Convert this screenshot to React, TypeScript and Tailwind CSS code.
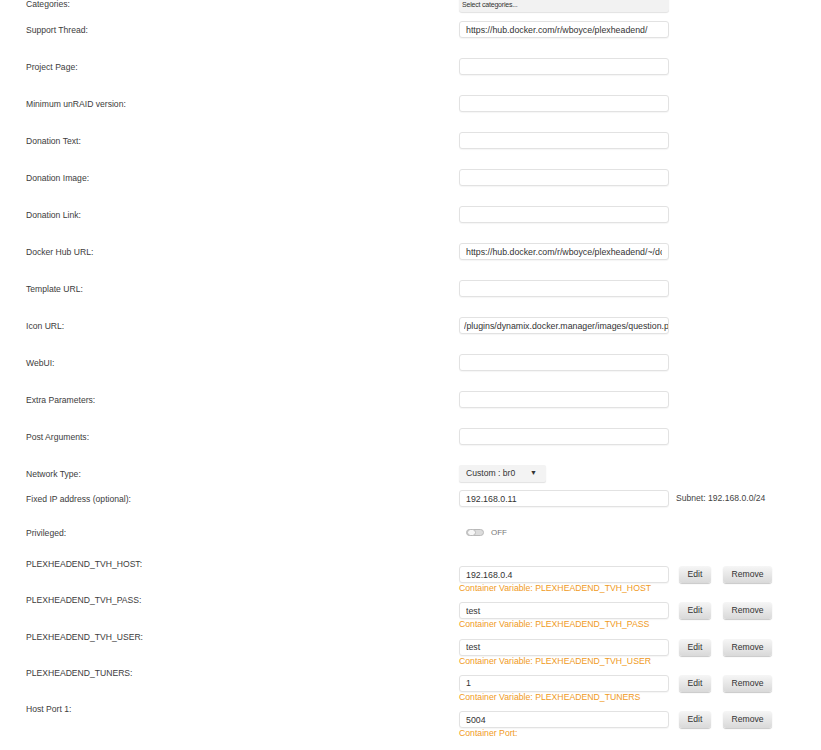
const fieldRows = [
  { label: "Support Thread:", value: "https://hub.docker.com/r/wboyce/plexheadend/" },
  { label: "Project Page:", value: "" },
  { label: "Minimum unRAID version:", value: "" },
  { label: "Donation Text:", value: "" },
  { label: "Donation Image:", value: "" },
  { label: "Donation Link:", value: "" },
  { label: "Docker Hub URL:", value: "https://hub.docker.com/r/wboyce/plexheadend/~/dockerfile/" },
  { label: "Template URL:", value: "" },
  { label: "Icon URL:", value: "/plugins/dynamix.docker.manager/images/question.png" },
  { label: "WebUI:", value: "" },
  { label: "Extra Parameters:", value: "" },
  { label: "Post Arguments:", value: "" },
];

const configRows = [
  { label: "PLEXHEADEND_TVH_HOST:", value: "192.168.0.4", note: "Container Variable: PLEXHEADEND_TVH_HOST" },
  { label: "PLEXHEADEND_TVH_PASS:", value: "test", note: "Container Variable: PLEXHEADEND_TVH_PASS" },
  { label: "PLEXHEADEND_TVH_USER:", value: "test", note: "Container Variable: PLEXHEADEND_TVH_USER" },
  { label: "PLEXHEADEND_TUNERS:", value: "1", note: "Container Variable: PLEXHEADEND_TUNERS" },
  { label: "Host Port 1:", value: "5004", note: "Container Port:" },
];

function Label({ children }: { children: React.ReactNode }) {
  return (
    <div className="w-[459px] shrink-0 pl-[26px] text-[8.6px] leading-[10px] text-[#3c3c3c]">
      {children}
    </div>
  );
}

function TextField({ value, className = "px-[6px]" }: { value: string; className?: string }) {
  return (
    <input
      readOnly
      value={value}
      className={`h-[17px] w-[210px] shrink-0 rounded-[3px] border border-[#e2e2e2] bg-white text-[8.8px] text-[#333] shadow-[0_1px_1px_rgba(0,0,0,0.04)] outline-none ${className}`}
    />
  );
}

function SmallButton({ children, className }: { children: React.ReactNode; className: string }) {
  return (
    <button
      className={`h-[17px] shrink-0 rounded-[3px] bg-linear-to-b from-[#f6f6f6] to-[#d9d9d9] text-[8.6px] text-[#333] shadow-[0_1px_1px_rgba(0,0,0,0.22)] ${className}`}
    >
      {children}
    </button>
  );
}

export default function App() {
  return (
    <div className="min-h-[750px] bg-white font-['Liberation_Sans',Arial,sans-serif]">
      <div className="-mt-[4px] flex flex-col">
        <div className="flex h-[15px] items-center">
          <Label>Categories:</Label>
          <div className="flex h-[17px] w-[210px] shrink-0 items-center rounded-[3px] bg-[#f2f2f2] pl-[3px] pt-[3px] text-[7px] tracking-[-0.2px] text-[#333] shadow-[0_1px_1px_rgba(0,0,0,0.12)]">
            Select categories...
          </div>
        </div>

        {fieldRows.map((row) => (
          <div key={row.label} className="flex h-[37px] items-center">
            <Label>{row.label}</Label>
            <TextField
              value={row.value}
              className={row.label === "Icon URL:" ? "pl-[4px] pr-0" : "px-[6px]"}
            />
          </div>
        ))}

        <div className="mt-[10px] flex h-[17px] items-center">
          <Label>Network Type:</Label>
          <div className="flex h-[17px] w-[87px] items-center justify-between rounded-[2px] bg-[#f3f3f3] pl-[7px] pr-[9px] text-[8.6px] text-[#333] shadow-[0_1px_1px_rgba(0,0,0,0.12)]">
            <span>Custom : br0</span>
            <span className="text-[7px]">▼</span>
          </div>
        </div>

        <div className="mt-2 flex h-[17px] items-center">
          <Label>Fixed IP address (optional):</Label>
          <TextField value="192.168.0.11" />
          <span className="ml-[7px] text-[8.6px] text-[#444]">Subnet: 192.168.0.0/24</span>
        </div>

        <div className="mt-[17px] flex h-[17px] items-center">
          <Label>Privileged:</Label>
          <div className="ml-[7px] flex h-[7px] w-[18px] items-center rounded-full border border-[#b9b9b9] bg-[#dcdcdc]">
            <div className="h-[7px] w-[9px] rounded-full border border-[#b9b9b9] bg-[#f7f7f7]" />
          </div>
          <span className="ml-[7px] text-[8px] text-[#777]">OFF</span>
        </div>

        <div className="mt-[18px] flex flex-col">
          {configRows.map((row) => (
            <div key={row.label} className="flex h-[36.3px]">
              <Label>{row.label}</Label>
              <div className="pt-[7px]">
                <div className="flex items-center">
                  <TextField value={row.value} />
                  <SmallButton className="ml-[10px] w-[32px]">Edit</SmallButton>
                  <SmallButton className="ml-[12px] w-[49px]">Remove</SmallButton>
                </div>
                <div className="text-[8.7px] leading-[10px] text-[#f09a23]">{row.note}</div>
              </div>
            </div>
          ))}
        </div>
      </div>
    </div>
  );
}
